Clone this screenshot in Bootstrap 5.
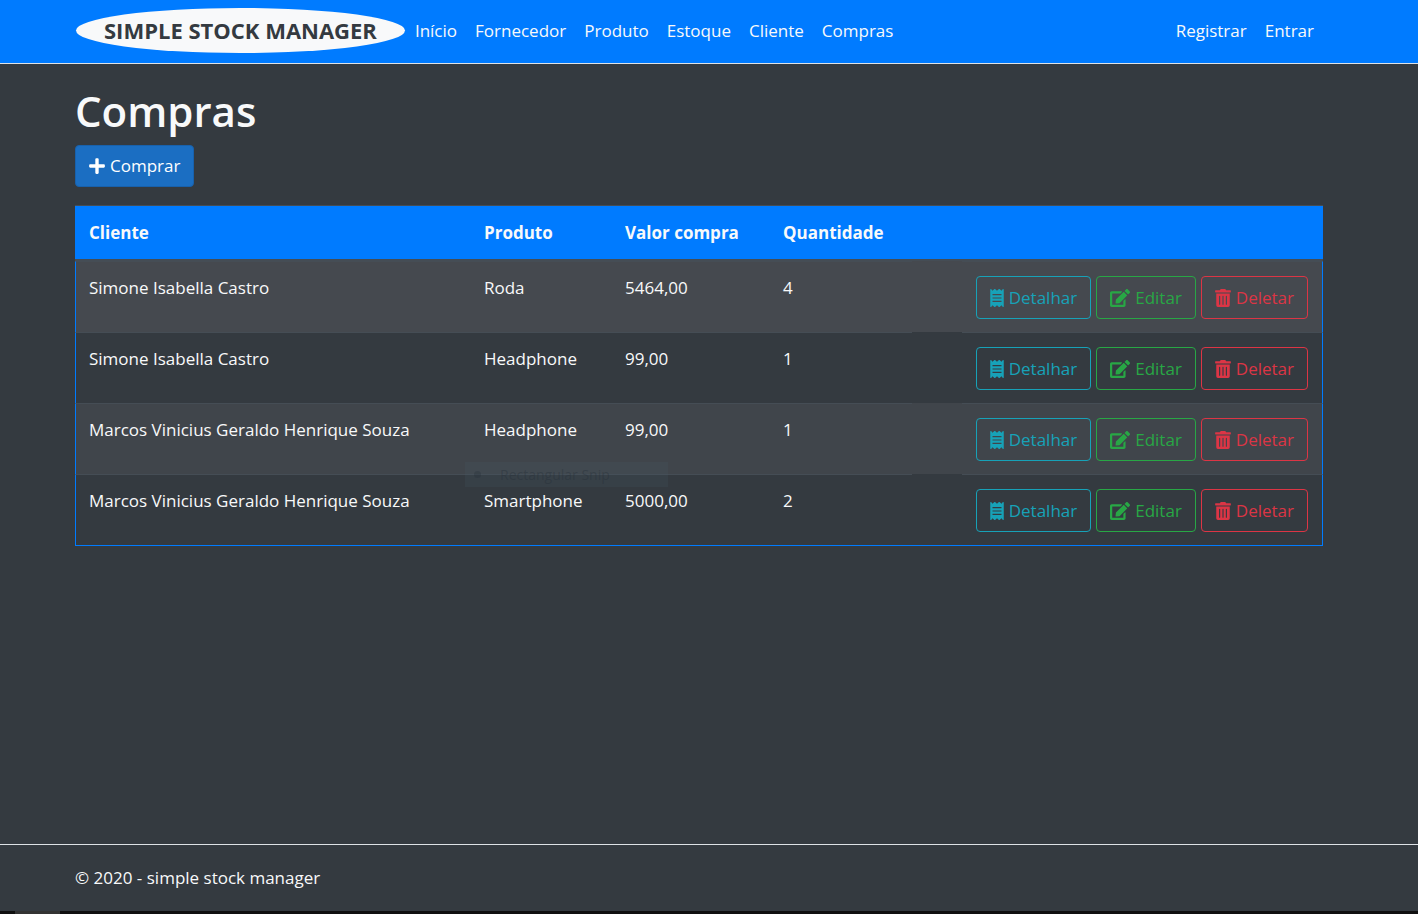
<!DOCTYPE html>
<html lang="pt-BR">
<head>
<meta charset="utf-8">
<meta name="viewport" content="width=device-width, initial-scale=1">
<title>Compras - simple stock manager</title>
<link href="https://cdn.jsdelivr.net/npm/bootstrap@5.3.0/dist/css/bootstrap.min.css" rel="stylesheet">
<script src="https://cdn.jsdelivr.net/npm/bootstrap@5.3.0/dist/js/bootstrap.bundle.min.js" defer></script>
<style>
  body { font-family: "Open Sans", "Noto Sans", sans-serif; font-size: 17px; line-height: 26px; background: #343a40; color: #f8f9fa; }
  .page-wrap { padding-left: 75px; padding-right: 95px; }
  .top-bar { background: #007bff; border-bottom: 1px solid #dee2e6; padding: 8px 0 10px; }
  .top-bar .navbar-brand { background: #f8f9fa; color: #343a40; border-radius: 50%; font-weight: 700; font-size: 22px; line-height: 29px; padding: 8px 28px; margin: 0 1px; }
  .top-bar .navbar-nav { --bs-navbar-nav-link-padding-x: 9px; --bs-nav-link-color: #f8f9fa; --bs-navbar-color: #f8f9fa; --bs-nav-link-hover-color: #fff; }
  .page-title { font-size: 42px; font-weight: 600; line-height: 52px; margin: 0 0 8px; padding-top: 21px; }
  .btn { font-size: 17px; line-height: 26px; padding: 7px 13px; border-radius: 4px; gap: 5px; }
  .btn svg { fill: currentColor; height: 18px; }
  .btn-buy { background: #1b6ec2; border-color: #1861ac; color: #fff; }
  .act { padding: 8px 13px 7px; background: transparent; white-space: nowrap; }
  .act-detail { color: #17a2b8; border-color: #17a2b8; }
  .act-edit { color: #28a745; border-color: #28a745; }
  .act-del { color: #dc3545; border-color: #dc3545; }
  .btn-row { gap: 5px; }
  .stock-table { border-collapse: separate; border-spacing: 0; table-layout: fixed; min-width: 1180px; color: #f8f9fa; margin: 18px 0 0; }
  .stock-table > :not(caption) > * > * { background: transparent; box-shadow: none; color: inherit; padding: 13px 14px; border: 0 solid #454d55; border-top-width: 1px; }
  .stock-table > thead > tr > th { background: #007bff; border-bottom-width: 2px; padding-top: 14px; }
  .stock-table > tbody > tr > td:first-child { border-left: 1px solid #007bff; padding-left: 13px; }
  .stock-table > tbody > tr > td:last-child { border-right: 1px solid #007bff; padding-top: 14px; }
  .stock-table > tbody > tr:last-child > td { border-bottom: 1px solid #007bff; }
  .stock-table > tbody > tr > td.blank-cell { border-top-color: transparent; }
  .stock-table > tbody > tr:nth-child(odd) > td { background: #40454b; }
  .stock-table > tbody > tr.row-active > td { background: #45494f; }
  .c-client { width: 395px; } .c-product { width: 141px; } .c-value { width: 158px; } .c-qty { width: 143px; } .c-blank { width: 50px; }
  .snip-tip { left: 390px; top: 257px; width: 203px; height: 25px; background: rgba(70, 90, 100, .2); color: rgba(35, 45, 55, .35); font-size: 14px; line-height: 25px; padding-left: 9px; gap: 19px; pointer-events: none; }
  .snip-dot { width: 7px; height: 7px; border-radius: 50%; background: rgba(35, 45, 55, .3); }
  .site-footer { border-top: 1px solid #dee2e6; padding-top: 20px; padding-bottom: 20px; }
  .task-strip { height: 3px; background: #101010; padding-left: 15px; }
  .task-strip span { width: 45px; height: 3px; background: #333; }
</style>
</head>
<body class="d-flex flex-column min-vh-100">
<svg class="d-none" aria-hidden="true">
  <symbol id="i-plus" viewBox="0 0 448 512"><path d="M416 208H272V64c0-17.67-14.33-32-32-32h-32c-17.67 0-32 14.33-32 32v144H32c-17.67 0-32 14.33-32 32v32c0 17.67 14.33 32 32 32h144v144c0 17.67 14.33 32 32 32h32c17.67 0 32-14.33 32-32V304h144c17.67 0 32-14.33 32-32v-32c0-17.67-14.33-32-32-32z"/></symbol>
  <symbol id="i-receipt" viewBox="0 0 384 512"><path fill-rule="evenodd" d="M358.4 3.2L320 48 265.6 3.2a15.9 15.9 0 0 0-19.2 0L192 48 137.6 3.2a15.9 15.9 0 0 0-19.2 0L64 48 25.6 3.2C15-4.7 0 2.8 0 16v480c0 13.2 15 20.7 25.6 12.8L64 464l54.4 44.8a15.9 15.9 0 0 0 19.2 0L192 464l54.4 44.8a15.9 15.9 0 0 0 19.2 0L320 464l38.4 44.8c10.5 7.9 25.6.4 25.6-12.8V16c0-13.3-15.1-20.7-25.6-12.8zM64 144h256v32H64zM64 240h256v32H64zM64 336h256v32H64z"/></symbol>
  <symbol id="i-edit" viewBox="0 0 576 512"><path d="M402.6 83.2l90.2 90.2c3.8 3.8 3.8 10 0 13.8L274.4 405.6l-92.8 10.3c-12.4 1.4-22.9-9.1-21.5-21.5l10.3-92.8L388.8 83.2c3.8-3.8 10-3.8 13.8 0zm162-22.9l-48.8-48.8c-15.2-15.2-39.9-15.2-55.2 0l-35.4 35.4c-3.8 3.8-3.8 10 0 13.8l90.2 90.2c3.8 3.8 10 3.8 13.8 0l35.4-35.4c15.2-15.3 15.2-40 0-55.2zM384 346.2V448H64V128h229.8c3.2 0 6.2-1.3 8.5-3.5l40-40c7.6-7.6 2.2-20.5-8.5-20.5H48C21.5 64 0 85.5 0 112v352c0 26.5 21.5 48 48 48h352c26.5 0 48-21.5 48-48V306.2c0-10.7-12.9-16-20.5-8.5l-40 40c-2.2 2.3-3.5 5.3-3.5 8.5z"/></symbol>
  <symbol id="i-trash" viewBox="0 0 448 512"><path d="M32 464a48 48 0 0 0 48 48h288a48 48 0 0 0 48-48V128H32zm272-256a16 16 0 0 1 32 0v224a16 16 0 0 1-32 0zm-96 0a16 16 0 0 1 32 0v224a16 16 0 0 1-32 0zm-96 0a16 16 0 0 1 32 0v224a16 16 0 0 1-32 0zM432 32H312l-9.4-18.7A24 24 0 0 0 281.1 0H166.8a23.72 23.72 0 0 0-21.4 13.3L136 32H16A16 16 0 0 0 0 48v32a16 16 0 0 0 16 16h416a16 16 0 0 0 16-16V48a16 16 0 0 0-16-16z"/></symbol>
</svg>
<header>
  <nav class="top-bar navbar navbar-expand">
    <div class="page-wrap w-100 d-flex align-items-center">
      <a class="navbar-brand" href="#">SIMPLE STOCK MANAGER</a>
      <ul class="navbar-nav me-auto">
        <li class="nav-item"><a class="nav-link" href="#">Início</a></li>
        <li class="nav-item"><a class="nav-link" href="#">Fornecedor</a></li>
        <li class="nav-item"><a class="nav-link" href="#">Produto</a></li>
        <li class="nav-item"><a class="nav-link" href="#">Estoque</a></li>
        <li class="nav-item"><a class="nav-link" href="#">Cliente</a></li>
        <li class="nav-item"><a class="nav-link" href="#">Compras</a></li>
      </ul>
      <ul class="navbar-nav">
        <li class="nav-item"><a class="nav-link" href="#">Registrar</a></li>
        <li class="nav-item"><a class="nav-link" href="#">Entrar</a></li>
      </ul>
    </div>
  </nav>
</header>
<main class="page-wrap flex-grow-1">
  <h1 class="page-title">Compras</h1>
  <button type="button" class="btn btn-buy d-inline-flex align-items-center"><svg width="16" aria-hidden="true"><use href="#i-plus"/></svg>Comprar</button>
  <div class="position-relative">
    <table class="table stock-table">
      <colgroup><col class="c-client"><col class="c-product"><col class="c-value"><col class="c-qty"><col class="c-blank"><col></colgroup>
      <thead>
        <tr><th scope="col">Cliente</th><th scope="col">Produto</th><th scope="col">Valor compra</th><th scope="col">Quantidade</th><th></th><th></th></tr>
      </thead>
      <tbody>
        <tr class="row-active"><td>Simone Isabella Castro</td><td>Roda</td><td>5464,00</td><td>4</td><td class="blank-cell"></td>
          <td><div class="btn-row d-flex justify-content-end">
            <button type="button" class="btn act act-detail d-flex align-items-center"><svg width="14" aria-hidden="true"><use href="#i-receipt"/></svg>Detalhar</button>
            <button type="button" class="btn act act-edit d-flex align-items-center"><svg width="20" aria-hidden="true"><use href="#i-edit"/></svg>Editar</button>
            <button type="button" class="btn act act-del d-flex align-items-center"><svg width="16" aria-hidden="true"><use href="#i-trash"/></svg>Deletar</button>
          </div></td></tr>
        <tr><td>Simone Isabella Castro</td><td>Headphone</td><td>99,00</td><td>1</td><td class="blank-cell"></td>
          <td><div class="btn-row d-flex justify-content-end">
            <button type="button" class="btn act act-detail d-flex align-items-center"><svg width="14" aria-hidden="true"><use href="#i-receipt"/></svg>Detalhar</button>
            <button type="button" class="btn act act-edit d-flex align-items-center"><svg width="20" aria-hidden="true"><use href="#i-edit"/></svg>Editar</button>
            <button type="button" class="btn act act-del d-flex align-items-center"><svg width="16" aria-hidden="true"><use href="#i-trash"/></svg>Deletar</button>
          </div></td></tr>
        <tr><td>Marcos Vinicius Geraldo Henrique Souza</td><td>Headphone</td><td>99,00</td><td>1</td><td class="blank-cell"></td>
          <td><div class="btn-row d-flex justify-content-end">
            <button type="button" class="btn act act-detail d-flex align-items-center"><svg width="14" aria-hidden="true"><use href="#i-receipt"/></svg>Detalhar</button>
            <button type="button" class="btn act act-edit d-flex align-items-center"><svg width="20" aria-hidden="true"><use href="#i-edit"/></svg>Editar</button>
            <button type="button" class="btn act act-del d-flex align-items-center"><svg width="16" aria-hidden="true"><use href="#i-trash"/></svg>Deletar</button>
          </div></td></tr>
        <tr><td>Marcos Vinicius Geraldo Henrique Souza</td><td>Smartphone</td><td>5000,00</td><td>2</td><td class="blank-cell"></td>
          <td><div class="btn-row d-flex justify-content-end">
            <button type="button" class="btn act act-detail d-flex align-items-center"><svg width="14" aria-hidden="true"><use href="#i-receipt"/></svg>Detalhar</button>
            <button type="button" class="btn act act-edit d-flex align-items-center"><svg width="20" aria-hidden="true"><use href="#i-edit"/></svg>Editar</button>
            <button type="button" class="btn act act-del d-flex align-items-center"><svg width="16" aria-hidden="true"><use href="#i-trash"/></svg>Deletar</button>
          </div></td></tr>
      </tbody>
    </table>
    <div class="snip-tip position-absolute d-flex align-items-center"><span class="snip-dot"></span><span>Rectangular Snip</span></div>
  </div>
</main>
<footer class="site-footer page-wrap">© 2020 - simple stock manager</footer>
<div class="task-strip d-flex"><span></span></div>
</body>
</html>
